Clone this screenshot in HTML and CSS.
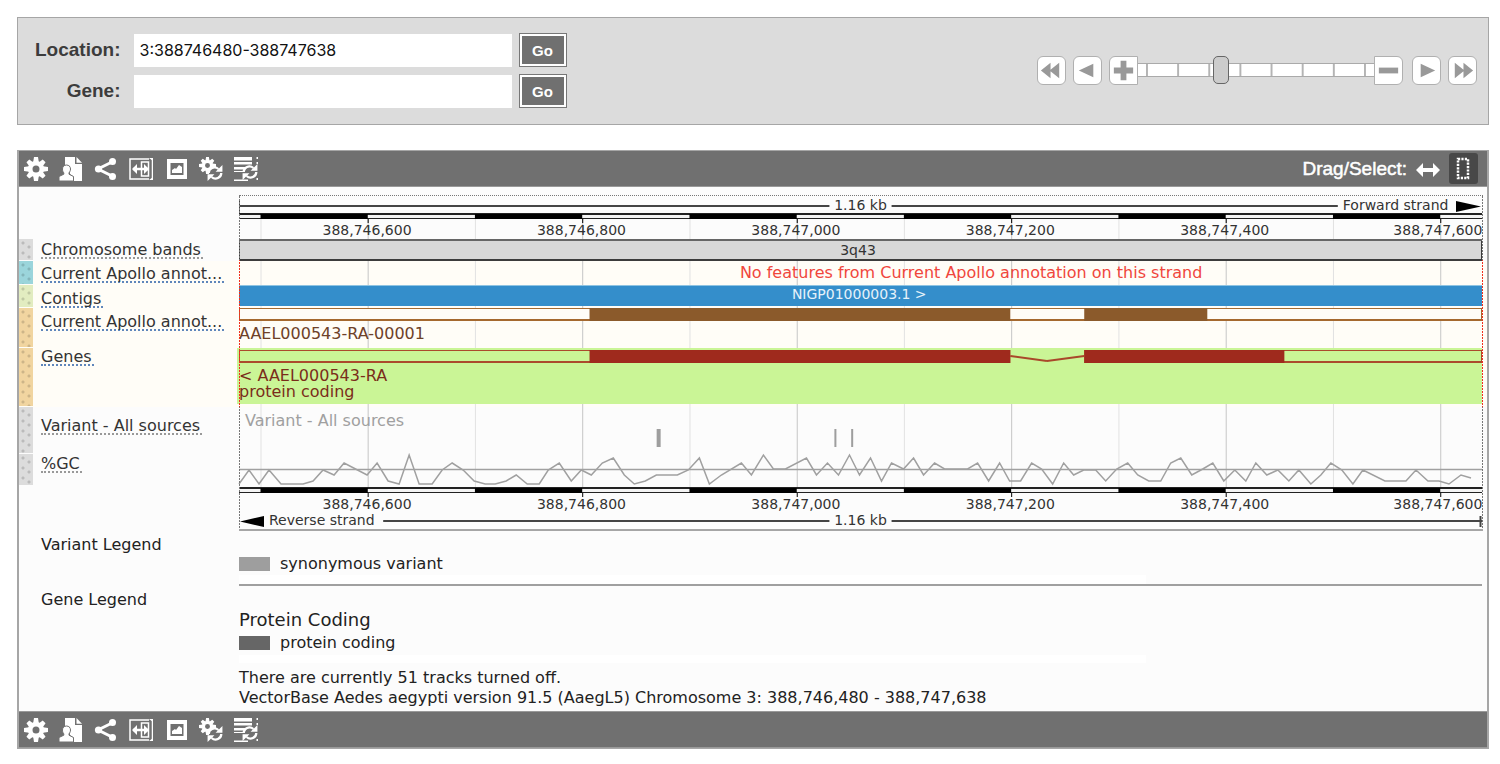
FILE: index.html
```html
<!DOCTYPE html>
<html lang="en">
<head>
<meta charset="utf-8">
<title>Region in detail</title>
<link rel="stylesheet" href="styles.css">
</head>
<body>
<svg class="defs" aria-hidden="true">
  <symbol id="i-gear" viewBox="0 0 24 24"><g fill="#fff"><path fill-rule="evenodd" d="M12 4a8 8 0 1 0 0 16 8 8 0 0 0 0-16zm0 4.500a3.500 3.500 0 1 1 0 7 3.500 3.500 0 0 1 0-7z"/><path d="M10 0h4l.8 5H9.200zM10 24h4l.8-5H9.200zM0 10v4l5 .8V9.200zM24 10v4l-5 .8V9.200z"/><path transform="rotate(45 12 12)" d="M10 0.500h4l.8 5H9.200zM10 23.500h4l.8-5H9.200zM0.500 10v4l5 .8V9.200zM23.500 10v4l-5 .8V9.200z"/></g></symbol>
  <symbol id="i-user" viewBox="0 0 24 24"><path fill="#fff" d="M6 0h10v7h7v17H14l1-4-4-3V9L6 8z"/><path fill="#fff" d="M17.500 0L23 5.800h-5.500z"/><path fill="#fff" stroke="#707070" d="M7.500 8c2.500 0 4 1.800 4 4 0 1.800-.8 3-1.500 3.800v1.400l4.500 2.300V24H0v-4.500l4.800-2.300v-1.400C4 15 3.500 13.800 3.500 12c0-2.200 1.500-4 4-4z"/></symbol>
  <symbol id="i-share" viewBox="0 0 24 24"><path d="M19 4.500L4 12l15 7.500" fill="none" stroke="#fff" stroke-width="3"/><g fill="#fff"><circle cx="18.500" cy="4.500" r="3.500"/><circle cx="4.500" cy="12" r="3.600"/><circle cx="18.500" cy="19.500" r="3.500"/></g></symbol>
  <symbol id="i-resize" viewBox="0 0 24 24"><g fill="none" stroke="#fff" stroke-width="1.500"><path d="M20 2H1v20h19M23.500 1v22M12.500 5h7v14h-7z"/><path d="M4 12h16" stroke-width="2.500"/></g><path fill="#fff" d="M3 12l5-5v10zM20 12l-5-5v10zM20 1h4v3zM20 23h4v-3z"/></symbol>
  <symbol id="i-image" viewBox="0 0 24 24"><path fill="#fff" fill-rule="evenodd" d="M3 2h20v20H3zm3.500 4v12h13V6z"/><path fill="#fff" d="M8 16v-3l3-2 1 1 3-4 3 2v6z"/></symbol>
  <symbol id="i-arrows" viewBox="0 0 14 14"><g fill="none" stroke="#fff" stroke-width="2"><path d="M1.500 7c0-4 5-6.500 8.500-3.500M12.500 7c0 4-5 6.500-8.500 3.500"/></g><path fill="#fff" d="M13.500 0v6H7.500zM.5 14V8h6z"/></symbol>
  <symbol id="i-gearreset" viewBox="0 0 24 24"><use href="#i-gear" width="17" height="17"/><circle cx="17" cy="17" r="7" fill="#707070"/><use href="#i-arrows" x="8" y="8" width="16" height="16"/></symbol>
  <symbol id="i-listreset" viewBox="0 0 24 24"><path fill="#fff" d="M0 0h18v3.500H0zM0 5h18v2.500H0zM0 10h12v2.500H0zM0 14h9v1H0zM0 22.500h14V24H0zM22.500 0H24v2h-1.500zM22.500 5H24v2h-1.500zM22.500 21H24v2h-1.500z"/><use href="#i-arrows" x="8" y="7" width="16" height="16"/></symbol>
</svg>

<form class="nav">
  <div class="nav-fields">
    <label for="loc">Location:</label>
    <input id="loc" type="text" value="3:388746480-388747638">
    <button class="go" type="button">Go</button>
    <label for="gene">Gene:</label>
    <input id="gene" type="text" value="">
    <button class="go" type="button">Go</button>
  </div>
  <div class="zoomer">
    <button class="step" type="button" aria-label="Back 1Mb"><svg viewBox="0 0 28 28"><path d="M13 6v16L3 14zM22 6v16L12 14z"/></svg></button>
    <button class="step" type="button" aria-label="Back one window"><svg viewBox="0 0 28 28"><path d="M20 7v14L5 14z"/></svg></button>
    <div class="scale">
      <button class="step step-in" type="button" aria-label="Zoom in"><svg viewBox="0 0 28 28"><path d="M11 4h6v7h7v6h-7v7h-6v-7H4v-6h7z"/></svg></button>
      <input type="range" min="0" max="220" value="75" aria-label="Zoom level">
      <button class="step step-out" type="button" aria-label="Zoom out"><svg viewBox="0 0 28 28"><path d="M4 11h20v6H4z"/></svg></button>
    </div>
    <button class="step" type="button" aria-label="Forward one window"><svg viewBox="0 0 28 28"><path d="M8 7v14l15-7z"/></svg></button>
    <button class="step" type="button" aria-label="Forward 1Mb"><svg viewBox="0 0 28 28"><path d="M6 6v16l10-8zM15 6v16l10-8z"/></svg></button>
  </div>
</form>

<main class="panel">
  <div class="toolbar">
    <button type="button" aria-label="Configure this image"><svg><use href="#i-gear"/></svg></button>
    <button type="button" aria-label="Add custom tracks"><svg><use href="#i-user"/></svg></button>
    <button type="button" aria-label="Share"><svg><use href="#i-share"/></svg></button>
    <button type="button" aria-label="Resize"><svg><use href="#i-resize"/></svg></button>
    <button type="button" aria-label="Export image"><svg><use href="#i-image"/></svg></button>
    <button type="button" aria-label="Reset configuration"><svg><use href="#i-gearreset"/></svg></button>
    <button type="button" aria-label="Reset track order"><svg><use href="#i-listreset"/></svg></button>
    <div class="mode">
      <span>Drag/Select:</span>
      <button type="button" aria-label="Drag"><svg viewBox="0 0 24 24"><path fill="#fff" d="M0 13l7-7v5h10V6l7 7-7 7v-5H7v5z"/></svg></button>
      <button class="on" type="button" aria-label="Select"><svg viewBox="0 0 24 24"><rect x="6" y="2" width="10" height="19" fill="none" stroke="#fff" stroke-width="2.500" stroke-dasharray="2.200 1.200"/></svg></button>
    </div>
  </div>

  <div class="map">
    <div class="rows">
      <svg class="grid" aria-hidden="true">
        <g class="minor"><rect x="1.73%" width="1" height="100%"/><rect x="18.98%" width="1" height="100%"/><rect x="36.24%" width="1" height="100%"/><rect x="53.49%" width="1" height="100%"/><rect x="70.75%" width="1" height="100%"/><rect x="88.01%" width="1" height="100%"/></g>
        <g class="major"><rect x="10.35%" width="1" height="100%"/><rect x="27.61%" width="1" height="100%"/><rect x="44.87%" width="1" height="100%"/><rect x="62.12%" width="1" height="100%"/><rect x="79.38%" width="1" height="100%"/><rect x="96.64%" width="1" height="100%"/></g>
      </svg>

      <div class="row">
        <svg class="track h44">
          <g class="rule"><rect y="10" width="47.500%" height="2"/><rect x="52.500%" y="10" width="35.900%" height="2"/><rect y="5" width="1" height="12"/></g>
          <text class="small" x="50%" y="15" text-anchor="middle">1.16 kb</text>
          <text class="small" x="97.300%" y="15" text-anchor="end">Forward strand</text>
          <svg x="100%" y="6" width="26" height="11" overflow="visible"><path d="M-26 0L-1 5.500L-26 11z"/></svg>
          <rect class="bar" y="18" width="100%" height="6"/><rect class="gap" y="20" width="100%" height="3"/>
          <g><rect x="1.73%" y="19" width="8.63%" height="5"/><rect x="18.98%" y="19" width="8.63%" height="5"/><rect x="36.24%" y="19" width="8.63%" height="5"/><rect x="53.49%" y="19" width="8.63%" height="5"/><rect x="70.75%" y="19" width="8.63%" height="5"/><rect x="88.01%" y="19" width="8.63%" height="5"/></g>
          <g><rect x="10.35%" y="24" width="1" height="4"/><rect x="27.61%" y="24" width="1" height="4"/><rect x="44.87%" y="24" width="1" height="4"/><rect x="62.12%" y="24" width="1" height="4"/><rect x="79.38%" y="24" width="1" height="4"/><rect x="96.64%" y="24" width="1" height="4"/></g>
          <g class="small" text-anchor="middle"><text x="10.300%" y="40">388,746,600</text><text x="27.550%" y="40">388,746,800</text><text x="44.800%" y="40">388,747,000</text><text x="62.050%" y="40">388,747,200</text><text x="79.300%" y="40">388,747,400</text><text x="96.450%" y="40">388,747,600</text></g>
        </svg>
      </div>

      <div class="row">
        <span class="tab grey"></span>
        <div class="name n-bands"><a class="quiet" href="#">Chromosome bands</a></div>
        <svg class="track h22"><rect width="100%" height="22" fill="#3c3c3c"/><rect width="100%" height="2" fill="#666"/><rect x="0.080%" y="2" width="99.840%" height="18" fill="#d8d8d8"/><text class="small" x="49.800%" y="16" text-anchor="middle">3q43</text></svg>
      </div>
      <div class="row lit">
        <span class="tab cyan"></span>
        <div class="name n-apollo"><a href="#">Current Apollo annot...</a></div>
        <svg class="track h24"><text class="t-warn" x="58.900%" y="17" text-anchor="middle">No features from Current Apollo annotation on this strand</text></svg>
      </div>
      <div class="row lit">
        <span class="tab lime"></span>
        <div class="name n-contigs"><a href="#">Contigs</a></div>
        <svg class="track h23"><rect width="100%" height="21" fill="#348ecb"/><rect width="100%" height="1" fill="#8fc4e2"/><text class="small t-contig" x="49.900%" y="14" text-anchor="middle">NIGP01000003.1 &gt;</text></svg>
      </div>
      <div class="row lit">
        <span class="tab amber"></span>
        <div class="name n-model"><a href="#">Current Apollo annot...</a></div>
        <svg class="track h40">
          <rect width="100%" height="13" fill="#a5692f"/><rect y="1" x="0.080%" width="99.840%" height="10" fill="#fffdf7"/>
          <rect x="28.200%" width="33.850%" height="13" fill="#8b5a2b"/><rect x="68%" width="9.900%" height="13" fill="#8b5a2b"/>
          <text class="t-apollo" y="31">AAEL000543-RA-00001</text>
        </svg>
      </div>
      <div class="row lit">
        <span class="tab amber"></span>
        <div class="name n-genes"><a href="#">Genes</a></div>
        <svg class="track h59">
          <rect class="hit" x="-2" width="100%" height="56"/><rect class="hit" x="50%" width="50%" height="56"/>
          <rect y="2" width="62.050%" height="13" fill="#ab4a2c"/><rect y="3" x="0.080%" width="61%" height="10" fill="#caf596"/>
          <rect y="2" x="68%" width="32%" height="13" fill="#ab4a2c"/><rect y="3" x="70%" width="29.920%" height="10" fill="#caf596"/>
          <rect x="28.200%" y="2" width="33.850%" height="13" fill="#9f2a1d"/><rect x="68%" y="2" width="16.100%" height="13" fill="#9f2a1d"/>
          <g stroke="#a9482a" stroke-width="2"><line x1="62.050%" y1="8" x2="65%" y2="13"/><line x1="65%" y1="13" x2="68%" y2="8"/></g>
          <text class="t-gene" y="33">&lt; AAEL000543-RA</text>
          <text class="t-gene" y="49">protein coding</text>
        </svg>
      </div>
      <div class="row">
        <span class="tab grey"></span>
        <div class="name n-variant"><a class="quiet" href="#">Variant - All sources</a></div>
        <svg class="track h47"><text class="t-mute" x="6" y="19">Variant - All sources</text><g fill="#9e9e9e"><rect x="33.600%" y="22" width="4" height="18"/><rect x="47.900%" y="22" width="2" height="18"/><rect x="49.250%" y="22" width="2" height="18"/></g></svg>
      </div>
      <div class="row">
        <span class="tab grey"></span>
        <div class="name n-gc"><a class="quiet" href="#">%GC</a></div>
        <svg class="track h32" viewBox="240 454 1242 32" preserveAspectRatio="none"><g class="gc"><path d="M240 469.500H1482"/><path d="M240 484L250 470 260 484 270 470 282 484H304L314 481 324 470 335 475 345 463 368 475 378 463 389 481 400 484 410 455 420 484H433L443 470 453 463 464 470 475 481 486 484H496L507 481 517 475 528 484H540L549 470 560 463 572 481 582 470 592 475 603 463 614 458 625 475 635 484 646 481 657 475H678L689 470 700 458 710 484 722 475 742 463 752 475 764 455 774 469H786L807 458 817 475 828 463 839 475 850 455 860 475 871 458 882 481 892 463 904 469 914 458 924 475 935 463 945 469H968L978 463 989 481 1000 463 1010 481H1021L1032 463 1042 469 1053 484 1064 463 1074 475 1084 470H1096L1106 481 1117 469 1128 463 1138 475 1149 481H1161L1171 463 1181 458 1192 475 1203 469 1213 463 1224 481 1235 470 1246 481 1256 463 1267 475 1278 470 1289 481 1299 470 1311 484 1321 475 1331 463 1342 470 1353 484 1363 470 1385 481H1406L1416 470 1428 481H1439L1449 484 1461 475 1471 478"/></g></svg>
      </div>

      <div class="row">
        <svg class="track h45">
          <rect class="bar" y="1" width="100%" height="6"/><rect class="gap" y="3" width="100%" height="3"/>
          <g><rect x="1.73%" y="2" width="8.63%" height="5"/><rect x="18.98%" y="2" width="8.63%" height="5"/><rect x="36.24%" y="2" width="8.63%" height="5"/><rect x="53.49%" y="2" width="8.63%" height="5"/><rect x="70.75%" y="2" width="8.63%" height="5"/><rect x="88.01%" y="2" width="8.63%" height="5"/></g>
          <g><rect x="10.35%" y="7" width="1" height="4"/><rect x="27.61%" y="7" width="1" height="4"/><rect x="44.87%" y="7" width="1" height="4"/><rect x="62.12%" y="7" width="1" height="4"/><rect x="79.38%" y="7" width="1" height="4"/><rect x="96.64%" y="7" width="1" height="4"/></g>
          <g class="small" text-anchor="middle"><text x="10.300%" y="23">388,746,600</text><text x="27.550%" y="23">388,746,800</text><text x="44.800%" y="23">388,747,000</text><text x="62.050%" y="23">388,747,200</text><text x="79.300%" y="23">388,747,400</text><text x="96.450%" y="23">388,747,600</text></g>
          <path d="M1 35.500L25 30v11z"/>
          <text class="small" x="30" y="39">Reverse strand</text>
          <g class="rule"><rect x="11.600%" y="34" width="35.900%" height="2"/><rect x="52.500%" y="34" width="47.500%" height="2"/><rect x="99.800%" y="30" width="2" height="11"/></g>
          <text class="small" x="50%" y="39" text-anchor="middle">1.16 kb</text>
        </svg>
      </div>
      <div class="frame"></div>
    </div>

    <div class="legend">
      <h2>Variant Legend</h2>
      <div class="legend-body lined"><p class="key"><i class="chip light"></i>synonymous variant</p></div>
      <h2>Gene Legend</h2>
      <div class="legend-body genes">
        <h3>Protein Coding</h3>
        <p class="key"><i class="chip dark"></i>protein coding</p>
        <p class="note">There are currently 51 tracks turned off.<br>VectorBase Aedes aegypti version 91.5 (AaegL5) Chromosome 3: 388,746,480 - 388,747,638</p>
      </div>
    </div>
  </div>

  <div class="toolbar bottom">
    <button type="button" aria-label="Configure this image"><svg><use href="#i-gear"/></svg></button>
    <button type="button" aria-label="Add custom tracks"><svg><use href="#i-user"/></svg></button>
    <button type="button" aria-label="Share"><svg><use href="#i-share"/></svg></button>
    <button type="button" aria-label="Resize"><svg><use href="#i-resize"/></svg></button>
    <button type="button" aria-label="Export image"><svg><use href="#i-image"/></svg></button>
    <button type="button" aria-label="Reset configuration"><svg><use href="#i-gearreset"/></svg></button>
    <button type="button" aria-label="Reset track order"><svg><use href="#i-listreset"/></svg></button>
  </div>
</main>
</body>
</html>
```
FILE: styles.css
```css
* { box-sizing: border-box; }
body { margin: 0; padding: 17px 11px 16px 17px; background: #fff; color: #222; font-family: "Liberation Sans", Arial, sans-serif; }
button { margin: 0; padding: 0; border: 0; background: none; font: inherit; cursor: pointer; }
.defs { display: none; }

/* Location form */
.nav { display: flex; align-items: center; justify-content: space-between; padding: 15px 11px 16px 17px; border: 1px solid #a6a6a6; background: #dcdcdc; }
.nav-fields { display: grid; grid-template-columns: auto 378px 48px; column-gap: 7px; row-gap: 7px; align-items: center; }
.nav-fields label { padding-right: 6px; text-align: right; font-size: 19px; font-weight: bold; color: #3c3c3c; }
.nav-fields input { width: 100%; height: 33px; padding: 0 6px; border: 0; background: #fff; color: #111; font: 16px Inter, sans-serif; }
.go { height: 34px; border: 1px solid #777; box-shadow: inset 0 0 0 2px #fff; background: #707070; color: #fff; font-size: 15px; font-weight: bold; }

.zoomer { display: flex; align-items: center; gap: 7px; padding-bottom: 1px; }
.scale { display: flex; align-items: center; margin-right: 2px; }
.step { width: 29px; height: 29px; border: 1px solid #b0b0b0; border-radius: 6px; background: #fff; }
.step svg { display: block; width: 27px; height: 27px; fill: #999; }
.step-in { border-radius: 6px 0 0 6px; }
.step-out { border-radius: 0 6px 6px 0; }
.scale input { appearance: none; width: 236px; height: 28px; margin: 0; background: none; }
.scale input::-webkit-slider-runnable-track { height: 14px; border: solid #aaa; border-width: 1px 0; background: linear-gradient(to right, #b4b4b4 2px, transparent 2px) 8px 0 / calc((100% - 18px) / 7) 100% #fff; }
.scale input::-webkit-slider-thumb { appearance: none; width: 16px; height: 28px; margin-top: -8px; border: 1px solid #666; border-radius: 5px; background: #ccc; }

/* Image panel */
.panel { margin-top: 25px; border: solid #a6a6a6; border-width: 1px 2px; background: #fcfcfc; }
.toolbar { display: flex; align-items: center; gap: 11px; height: 36px; padding: 0 9px 0 5px; border-bottom: 1px solid #999; background: #707070; color: #fff; }
.toolbar button, .toolbar svg { display: block; width: 24px; height: 24px; }
.mode { display: flex; align-items: center; gap: 9px; margin-left: auto; font-size: 19px; -webkit-text-stroke: 0.5px #fff; }
.toolbar .mode .on { width: 29px; height: 31px; padding: 3px; border-radius: 3px; background: #484848; }

/* Track map */
.map { padding-top: 8px; font-family: "DejaVu Sans", sans-serif; font-size: 16px; }
.rows { position: relative; isolation: isolate; }
.row { display: grid; grid-template-columns: 14px 206px 1fr; padding-right: 5px; }
.lit { background: #fffdf7; }
.track { grid-column: 3; display: block; position: relative; z-index: 1; width: 100%; overflow: visible; fill: #000; }
.track text { fill: #333; }
.track .t-warn { fill: #f0463c; }
.track .t-contig { fill: #e6f2fa; }
.track .t-apollo { fill: #6e4128; }
.track .t-gene { fill: #7a2d1a; }
.track .t-mute { fill: #a0a0a0; }
.small { font-size: 14px; }
.h22 { height: 22px; }
.h23 { height: 23px; }
.h24 { height: 24px; }
.h32 { height: 32px; }
.h40 { height: 40px; }
.h44 { height: 44px; }
.h45 { height: 45px; }
.h47 { height: 47px; }
.h59 { height: 59px; }
.rule { fill: #444; }
.bar { fill: #222; }
.gap { fill: #f4f4f4; }
.hit { fill: #caf596; }
.gc { fill: none; stroke: #a0a0a0; stroke-width: 1.5px; }
.gc path { vector-effect: non-scaling-stroke; }

.grid { position: absolute; z-index: 0; top: 24px; left: 220px; width: calc(100% - 225px); height: calc(100% - 68px); }
.minor { fill: #e2e2e2; }
.major { fill: #c6c6c6; }
/* Dotted outline; its sides turn red beside the highlighted tracks */
.frame { position: absolute; z-index: 2; top: 0; bottom: 0; left: 220px; right: 4px; border-top: 1px dotted #777; border-bottom: 2px solid #a6a6a6; pointer-events: none; }
.frame::after { content: ""; position: absolute; inset: 0; border: solid; border-width: 0 1px; border-image: linear-gradient(#777 65px, #f0301e 65px 211px, #777 211px) 1; -webkit-mask: repeating-linear-gradient(#000 0 2px, transparent 2px 3px); mask: repeating-linear-gradient(#000 0 2px, transparent 2px 3px); }

.tab { margin-bottom: 1px; background-image: radial-gradient(circle at 4px 4px, #00000026 1px, transparent 2px), radial-gradient(circle at 10px 8px, #00000026 1px, transparent 2px); background-size: 14px 10px; }
.grey { background-color: #dcdcdc; }
.cyan { background-color: #9bd5db; }
.lime { background-color: #e2ecc0; }
.amber { background-color: #f1d5a0; }

.name { grid-column: 2; padding-left: 8px; line-height: 0; }
.name a { display: inline-block; padding-right: 2px; border-bottom: 2px dotted #5f86bb; color: #333; line-height: 15px; text-decoration: none; white-space: nowrap; }
.name .quiet { border-bottom-color: #999; }
.n-bands { padding-top: 3px; }
.n-apollo { padding-top: 5px; }
.n-contigs, .n-model { padding-top: 6px; }
.n-genes { padding-top: 1px; }
.n-variant { padding-top: 11px; }
.n-gc { padding-top: 2px; }

/* Legends */
.legend { display: grid; grid-template-columns: 220px 1fr; padding-right: 5px; line-height: 20px; }
.legend h2 { margin: 0; padding: 4px 0 0 22px; font-size: 16px; font-weight: normal; }
.legend p, .legend h3 { margin: 0; }
.lined { padding: 23px 0 10px; border-bottom: 2px solid #a0a0a0; background: linear-gradient(#fff, #fff) 0 100% / 73% 9px no-repeat; }
.genes { padding: 23px 0 3px; }
.legend h3 { font-size: 18px; font-weight: normal; line-height: 22px; }
.key { display: flex; align-items: center; gap: 10px; }
.key .chip { width: 31px; height: 14px; }
.genes .key { line-height: 24px; }
.light { background: #9e9e9e; }
.dark { background: #666; }
.note::before { content: ""; display: block; width: 73%; height: 8px; margin-bottom: 5px; background: #fff; }
.bottom { border: solid #999; border-width: 1px 0; height: 37px; }
```
